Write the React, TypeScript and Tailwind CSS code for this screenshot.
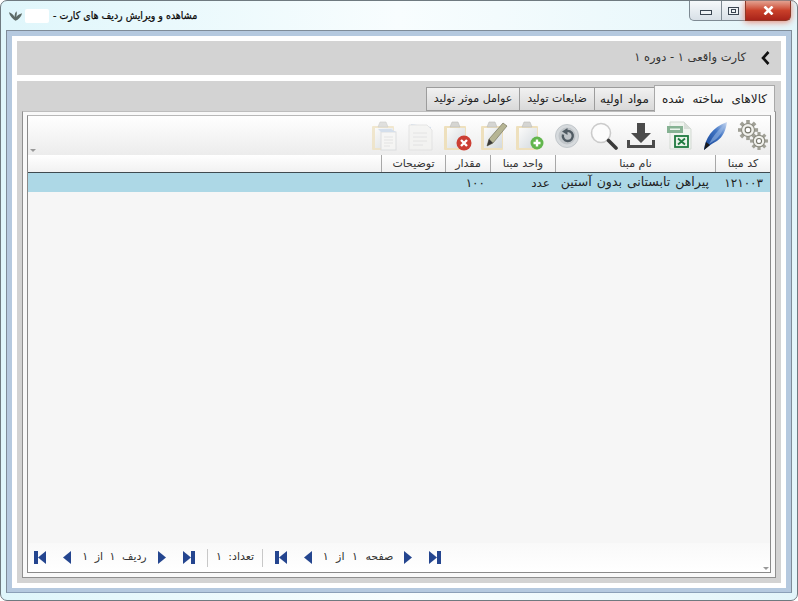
import React from "react";

const font = { fontFamily: '"DejaVu Sans", sans-serif' };

function Clip({ children, id }: { children?: React.ReactNode; id: string }) {
  return (
    <svg width="30" height="30" viewBox="0 0 30 30">
      <defs>
        <linearGradient id={id} x1="0" y1="0" x2="1" y2="1">
          <stop offset="0" stopColor="#fbfbfa" />
          <stop offset="1" stopColor="#d3d9de" />
        </linearGradient>
      </defs>
      <rect x="2" y="5" width="22" height="24" rx="1" fill="#eee0bd" />
      <rect x="5" y="7" width="18" height="20" fill={`url(#${id})`} />
      <path d="M10 1h6l2 5H8z" fill="#d5d5d2" stroke="#bdbdb8" strokeWidth=".6" />
      {children}
    </svg>
  );
}

function Gear({ cx, cy, r }: { cx: number; cy: number; r: number }) {
  const teeth = Array.from({ length: 8 }, (_, i) => i * 45);
  return (
    <g>
      {teeth.map((a) => (
        <rect key={a} x={cx - r * 0.2} y={cy - r * 1.12} width={r * 0.4} height={r * 0.45} fill="#a0a096" transform={`rotate(${a} ${cx} ${cy})`} />
      ))}
      <circle cx={cx} cy={cy} r={r * 0.72} fill="#f1f1ec" stroke="#8b8b80" strokeWidth="1.1" />
      <circle cx={cx} cy={cy} r={r * 0.32} fill="#fff" stroke="#77776c" strokeWidth="1.1" />
    </g>
  );
}

function Toolbar() {
  return (
    <div className="flex h-[39px] items-center justify-end pr-[2px]">
      {/* copy */}
      <div className="flex opacity-70">
        <Clip id="c1">
          <rect x="11" y="11" width="15" height="18" fill="#f7f7f5" stroke="#d3d6d8" />
          <path d="M8 8h13l5 3H11z" fill="#c6d5e8" />
          <path d="M14 16h9M14 19h9M14 22h9M14 25h6" stroke="#dddddd" />
        </Clip>
      </div>
      {/* doc */}
      <svg width="30" height="30" viewBox="0 0 30 30" className="ml-[5px] opacity-70">
        <path d="M6 3l20 3-1 3-19-3z" fill="#bcd0e8" />
        <path d="M4 4h18l5 5v20H4z" fill="#f3f3f1" stroke="#dddddd" />
        <path d="M8 12h14M8 16h14M8 20h14M8 24h10" stroke="#dcdcdc" />
      </svg>
      {/* delete */}
      <div className="ml-[7px] flex">
        <Clip id="c2">
          <circle cx="22" cy="22" r="7.500" fill="#cc3f34" />
          <path d="M19 19l6 6m0-6l-6 6" stroke="#fff" strokeWidth="2.400" />
        </Clip>
      </div>
      {/* edit */}
      <div className="ml-[7px] flex">
        <Clip id="c3">
          <path d="M8 25l2-7L24 2l4 3-14 17z" fill="#b6b594" stroke="#77765f" strokeWidth=".7" />
          <path d="M8 25l2-7 4 4z" fill="#3a3a3a" />
        </Clip>
      </div>
      {/* add */}
      <div className="ml-[5px] flex">
        <Clip id="c4">
          <circle cx="23" cy="22" r="6.500" fill="#62b64d" />
          <path d="M23 18.500v7m-3.500-3.500h7" stroke="#fff" strokeWidth="2.400" />
        </Clip>
      </div>
      {/* refresh */}
      <svg width="24" height="24" viewBox="0 0 24 24" className="ml-[11px]">
        <circle cx="12" cy="12" r="11.500" fill="#d6dadd" stroke="#c2c7cb" />
        <circle cx="12" cy="12" r="8.500" fill="#c0c5c9" />
        <path d="M8 10.500a5 5 0 1 0 2.500-3" fill="none" stroke="#505b63" strokeWidth="2.400" />
        <path d="M12.500 4v7L7 7.500z" fill="#505b63" />
      </svg>
      {/* search */}
      <svg width="28" height="28" viewBox="0 0 28 28" className="ml-[11px]">
        <circle cx="11" cy="11" r="9.500" fill="#fcfcfc" stroke="#cbcbcb" strokeWidth="1.600" />
        <path d="M18.500 18.500l7.500 7.500" stroke="#3a3a3a" strokeWidth="3.600" strokeLinecap="round" />
      </svg>
      {/* download */}
      <svg width="28" height="26" viewBox="0 0 28 26" className="ml-[9px]">
        <path d="M10 0h8v10h6L14 20 4 10h6z" fill="#4b4b4b" />
        <path d="M0 17v8h28v-8h-3v5H3v-5z" fill="#4b4b4b" />
      </svg>
      {/* excel */}
      <svg width="26" height="29" viewBox="0 0 26 29" className="ml-[12px]">
        <path d="M3 1h14l7 7v20H3z" fill="#f0f4ef" stroke="#d3dad3" />
        <path d="M17 1l7 7h-7z" fill="#d8ded8" />
        <rect x="0" y="5" width="16" height="7" fill="#86b293" />
        <rect x="3" y="7.500" width="10" height="1.500" fill="#e9f3eb" />
        <rect x="8" y="15" width="13" height="11" fill="#e9f3e9" stroke="#1f7a3f" strokeWidth="1.800" />
        <path d="M11 17.500l7 6m0-6l-7 6" stroke="#1f7a3f" strokeWidth="1.800" />
      </svg>
      {/* feather */}
      <svg width="24" height="30" viewBox="0 0 24 30" className="ml-[10px]">
        <defs>
          <linearGradient id="fe" x1="0" y1="1" x2="1" y2="0">
            <stop offset="0" stopColor="#123f8f" />
            <stop offset="0.6" stopColor="#3f74c4" />
            <stop offset="1" stopColor="#cfdcf2" />
          </linearGradient>
        </defs>
        <path d="M1 29C2 18 9 6 24 1c-1 8-4 15-10 19-3 2-6 3-8 5z" fill="url(#fe)" />
        <path d="M6 23C10 15 15 9 22 3c-2 7-5 12-10 16z" fill="#9dbbe6" opacity=".55" />
        <path d="M1 29l2-8 4 3z" fill="#1a1a1a" />
      </svg>
      {/* gears */}
      <svg width="30" height="31" viewBox="0 0 30 31" className="ml-[11px]">
        <Gear cx={10} cy={10} r={9} />
        <Gear cx={21} cy={21} r={8} />
      </svg>
    </div>
  );
}

function NavIcon({ kind }: { kind: "first" | "prev" | "next" | "last" }) {
  const c = "#24458f";
  if (kind === "first")
    return (
      <svg width="12" height="13" viewBox="0 0 12 13" className="shrink-0">
        <rect x="0" y="0" width="4" height="13" fill={c} />
        <path d="M12 0v13L4 6.500z" fill={c} />
      </svg>
    );
  if (kind === "last")
    return (
      <svg width="12" height="13" viewBox="0 0 12 13" className="shrink-0">
        <rect x="8" y="0" width="4" height="13" fill={c} />
        <path d="M0 0v13l8-6.500z" fill={c} />
      </svg>
    );
  if (kind === "prev")
    return (
      <svg width="8" height="13" viewBox="0 0 8 13" className="shrink-0">
        <path d="M8 0v13L0 6.500z" fill={c} />
      </svg>
    );
  return (
    <svg width="8" height="13" viewBox="0 0 8 13" className="shrink-0">
      <path d="M0 0v13l8-6.500z" fill={c} />
    </svg>
  );
}

const cols = [
  { label: "کد مبنا", w: "w-[55px]", value: "۱۲۱۰۰۳", cls: "pr-[7px] text-right text-[12px] tracking-[1px]" },
  { label: "نام مبنا", w: "w-[160px]", value: "پیراهن تابستانی بدون آستین", cls: "pr-[6px] text-right text-[12.5px] [word-spacing:1px]" },
  { label: "واحد مبنا", w: "w-[65px]", value: "عدد", cls: "pr-[5px] text-right text-[12px]" },
  { label: "مقدار", w: "w-[45px]", value: "۱۰۰", cls: "pr-[5px] text-right text-[12px] tracking-[1px]" },
  { label: "توضیحات", w: "w-[64px]", value: "", cls: "" },
];

const tabBase = "flex h-[24px] items-center justify-center border border-r-0 border-[#9c9c9c] bg-gradient-to-b from-[#f1f1f1] to-[#d9d9d9]";

export default function App() {
  return (
    <div style={font} className="relative flex h-[601px] w-[798px] flex-col rounded-[7px] border border-[#6f7a80] bg-gradient-to-r from-[#dff6fb] via-[#f8fdfe] to-[#e3f5fa] text-[11px] text-[#222]">
      <div className="flex h-[29px] shrink-0 items-center justify-between pl-[6px]">
        <div className="flex items-center">
          <svg width="17" height="14" viewBox="0 0 18 14">
            <path d="M9 12C6 10 3 7 2 3c3 1 5 3 6 5 0-3 1-5 2-6 1 2 0 4 0 6 1-2 3-3 6-4-1 4-4 7-7 8z" fill="#5c6a66" />
          </svg>
          <span className="ml-[1px] h-[14px] w-[24px] rounded-[2px] bg-white" />
          <span dir="rtl" className="ml-[4px] font-['DejaVu_Sans_Condensed','DejaVu_Sans',sans-serif] text-[10.5px] leading-none text-[#0b0b0b] [-webkit-text-stroke:0.25px_#0b0b0b]">
            مشاهده و ویرایش ردیف های کارت -
          </span>
        </div>
        <div className="mr-[6px] flex h-[20px] items-stretch self-start">
          <div className="flex w-[33px] items-center justify-center rounded-bl-[5px] border border-t-0 border-[#7e8a93] bg-gradient-to-b from-[#f6f9fb] to-[#d8e0e7]">
            <span className="mt-[4px] h-[5px] w-[12px] border border-[#3b4652] bg-[#eef2f5]" />
          </div>
          <div className="flex w-[23px] items-center justify-center border-b border-[#7e8a93] bg-gradient-to-b from-[#f6f9fb] to-[#d8e0e7]">
            <span className="flex h-[8px] w-[11px] items-center justify-center border border-[#3b4652] bg-[#eef2f5]">
              <span className="h-[4px] w-[5px] border border-[#3b4652]" />
            </span>
          </div>
          <div className="flex w-[46px] items-center justify-center rounded-br-[5px] border border-t-0 border-[#8d3a28] bg-gradient-to-b from-[#e2a090] via-[#c9402a] to-[#a9231a] shadow-[0_1px_6px_#e98470]">
            <svg width="11" height="9" viewBox="0 0 11 9">
              <path d="M1.500 .5l8 8M9.500 .5l-8 8" stroke="#fff" strokeWidth="2.600" />
            </svg>
          </div>
        </div>
      </div>

      <div className="mx-[5px] mb-[7px] flex min-h-0 flex-1 flex-col border border-[#7f8c99] border-b-[#8ba0b8] bg-[#b5c9df] px-[5px] pb-[4px] pt-[5px]">
        <div className="flex min-h-0 flex-1 flex-col gap-[6px] bg-white px-[5px] pb-[5px] pt-[5px]">
          <div dir="rtl" className="flex h-[34px] shrink-0 items-center bg-[#d3d3d3] pr-[11px] text-[#333]">
            <svg width="9" height="14" viewBox="0 0 9 14">
              <path d="M7.500 1L2 7l5.500 6" fill="none" stroke="#111" strokeWidth="2.600" />
            </svg>
            <span className="mr-[15px] text-[11.5px]">کارت واقعی ۱ - دوره ۱</span>
          </div>

          <div className="flex min-h-0 flex-1 flex-col bg-[#d3d3d3] px-[5px] pb-[5px]">
            <div dir="rtl" className="flex h-[30px] shrink-0 items-end pr-[1px] text-[11px] text-[#222]">
              <div className="z-10 mb-[-1px] flex h-[27px] w-[121px] items-center justify-center border border-b-0 border-[#a8a8a8] bg-[#f7f7f7] text-[12px] [word-spacing:4px]">کالاهای ساخته شده</div>
              <div className={`${tabBase} w-[60px] text-[12px] [word-spacing:1px]`}>مواد اولیه</div>
              <div className={`${tabBase} w-[75px]`}>ضایعات تولید</div>
              <div className={`${tabBase} w-[93px]`}>عوامل موثر تولید</div>
            </div>

            <div className="flex min-h-0 flex-1 flex-col border border-[#8f8f8f] border-t-[#bdbdbd] bg-[#f9f9f9] px-[4px] pb-[4px] pt-[3px]">
              <div className="relative flex min-h-0 flex-1 flex-col border border-[#8a8a8a] border-t-[#b8b8b8] bg-white">
                <div className="bg-gradient-to-b from-white to-[#ececec]">
                  <Toolbar />
                </div>
                <span className="absolute left-[2px] top-[33px] h-0 w-0 border-x-[3px] border-t-[3px] border-x-transparent border-t-[#999]" />
                <div dir="rtl" className="flex h-[18px] shrink-0 border-b border-[#3f4a4f] bg-gradient-to-b from-white to-[#f1f1f1]">
                  {cols.map((c) => (
                    <div key={c.label} className={`${c.w} flex shrink-0 items-center justify-center border-l border-[#a8a8a8] text-[11px] leading-none text-[#333]`}>{c.label}</div>
                  ))}
                </div>
                <div dir="rtl" className="flex h-[19px] shrink-0 items-center bg-[#add8e6] text-[#222]">
                  {cols.map((c) => (
                    <div key={c.label} className={`${c.w} shrink-0 leading-none ${c.cls}`}>{c.value}</div>
                  ))}
                </div>
                <div className="flex-1 bg-[#f6f6f6]" />
                <div className="relative flex h-[29px] shrink-0 items-center bg-gradient-to-b from-[#f9f9f9] to-white pl-[6px] text-[11px] text-[#333]">
                  <NavIcon kind="first" />
                  <span className="ml-[17px] flex"><NavIcon kind="prev" /></span>
                  <span dir="rtl" className="w-[87px] text-center [word-spacing:3px]">ردیف ۱ از ۱</span>
                  <NavIcon kind="next" />
                  <span className="ml-[17px] flex"><NavIcon kind="last" /></span>
                  <span className="ml-[12px] h-[18px] w-px bg-[#c8c8c8]" />
                  <span dir="rtl" className="w-[54px] text-center [word-spacing:3px]">تعداد: ۱</span>
                  <span className="h-[18px] w-px bg-[#c8c8c8]" />
                  <span className="ml-[12px] flex"><NavIcon kind="first" /></span>
                  <span className="ml-[17px] flex"><NavIcon kind="prev" /></span>
                  <span dir="rtl" className="w-[92px] text-center [word-spacing:4px]">صفحه ۱ از ۱</span>
                  <NavIcon kind="next" />
                  <span className="ml-[17px] flex"><NavIcon kind="last" /></span>
                  <span className="absolute bottom-[2px] right-[1px] h-0 w-0 border-x-[3px] border-t-[3px] border-x-transparent border-t-[#999]" />
                </div>
              </div>
            </div>
          </div>
        </div>
      </div>
    </div>
  );
}
